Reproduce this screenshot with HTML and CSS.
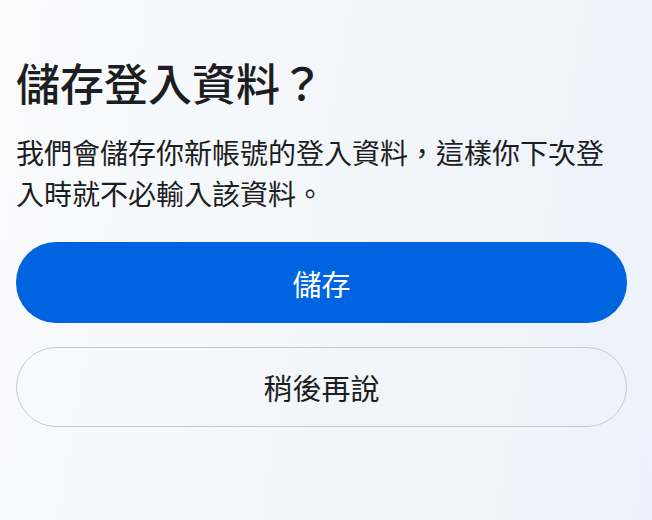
FILE: index.html
```html
<!DOCTYPE html>
<html lang="zh-Hant">
<head>
    <meta charset="UTF-8">
    <meta name="viewport" content="width=device-width, initial-scale=1.0">
    <title>儲存登入資料</title>
    <link rel="stylesheet" href="styles.css">
</head>
<body>
    <div class="sheet">
        <h1 class="title">儲存登入資料？</h1>
        <p class="desc">我們會儲存你新帳號的登入資料，這樣你下次登入時就不必輸入該資料。</p>
        <div class="actions">
            <button type="button" class="btn btn-primary">儲存</button>
            <button type="button" class="btn btn-secondary">稍後再說</button>
        </div>
    </div>
</body>
</html>
```

FILE: styles.css
```css
:root {
    --primary-color: #0064e0;
    --text-color: #1c1e21;
    --border-color: #c6cad0;
}

* {
    box-sizing: border-box;
    margin: 0;
    padding: 0;
    font-family: "Noto Sans CJK TC", "Noto Sans", sans-serif;
}

html, body {
    height: 100%;
}

body {
    background: linear-gradient(100deg, #fbfbfc 0%, #f2f5fa 55%, #ecf2fb 100%);
    color: var(--text-color);
}

.sheet {
    padding: 56px 25px 0 16px;
}

.title {
    font-size: 44px;
    line-height: 52px;
    font-weight: 500;
    margin-bottom: 24px;
}

.desc {
    font-size: 28px;
    line-height: 41px;
    font-weight: 400;
}

.actions {
    display: flex;
    flex-direction: column;
    gap: 24px;
    margin-top: 28px;
}

.btn {
    width: 100%;
    height: 80px;
    border-radius: 40px;
    font-size: 29px;
    font-weight: 400;
    cursor: pointer;
}

.btn-primary {
    height: 81px;
    background-color: var(--primary-color);
    color: #ffffff;
    border: none;
}

.btn-secondary {
    background-color: transparent;
    color: var(--text-color);
    border: 1px solid var(--border-color);
}
```
